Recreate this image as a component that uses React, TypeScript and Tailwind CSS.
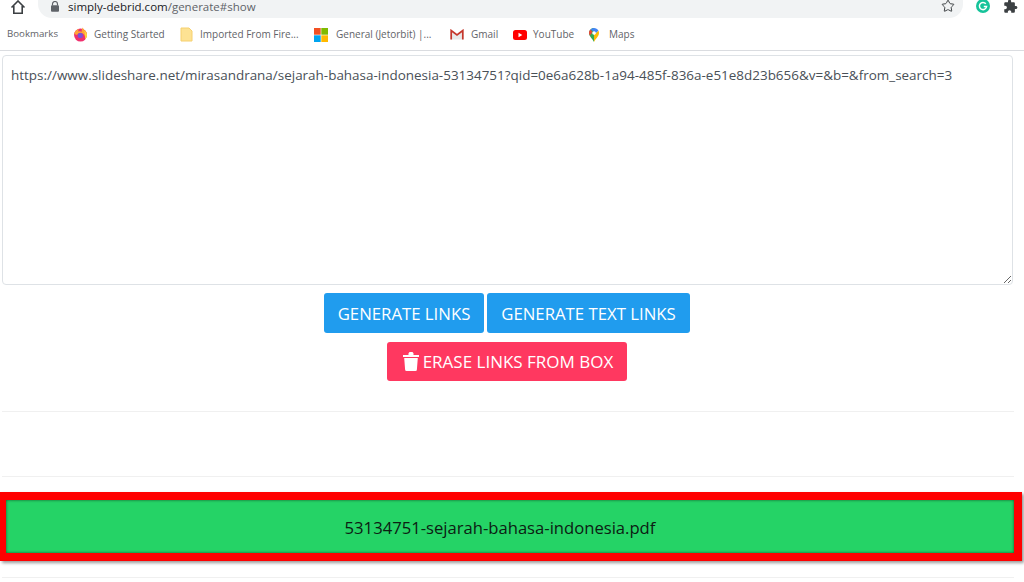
import { Star } from "lucide-react"

function Bookmark({ icon, label, className }: { icon: React.ReactNode; label: string; className: string }) {
    return (
        <div className={"flex items-center " + className}>
            {icon}
            <span className="text-[10px] text-[#5f6368] whitespace-nowrap">{label}</span>
        </div>
    )
}

const FirefoxIcon = (
    <svg width="15" height="15" viewBox="0 0 16 16" className="mr-[6px] shrink-0">
        <circle cx="8" cy="8.600" r="6.900" fill="#f0306e" />
        <path d="M1.300 7.500C2 4.500 4 2.500 6.500 2.200 5.800 3 5.500 4 5.800 5c1-.6 2.500-.6 3.600.2C9 3.500 9.500 1.800 10.500.5c.2 1.200 1 2 2.200 3 1.400 1.200 2.300 3 2.200 5-.1 1.700-.8 3.200-2 4.300.4-2.300-.4-4.800-2.600-6C8 5.800 5 6.500 4.300 8.500 3.300 8 2.200 7.800 1.300 7.500z" fill="#ffa436" />
        <path d="M12 4c1.600 1 2.900 2.800 2.900 4.700 0 1.700-.8 3.100-2 4.100.4-2.300-.2-6-.9-8.800z" fill="#ffd23f" />
        <circle cx="7.800" cy="9" r="2.800" fill="#7d4fd6" />
    </svg>
)

const NoteIcon = (
    <svg width="13" height="15" viewBox="0 0 13 15" className="mr-[7px] shrink-0">
        <path d="M1 1h8l3 3v10H1z" fill="#fde293" stroke="#f6d06f" />
    </svg>
)

const MicrosoftIcon = (
    <svg width="14" height="14" viewBox="0 0 14 14" className="mr-[8px] shrink-0">
        <rect x="0" y="0" width="6.700" height="6.700" fill="#f25022" />
        <rect x="7.300" y="0" width="6.700" height="6.700" fill="#7fba00" />
        <rect x="0" y="7.300" width="6.700" height="6.700" fill="#00a4ef" />
        <rect x="7.300" y="7.300" width="6.700" height="6.700" fill="#ffb900" />
    </svg>
)

const GmailIcon = (
    <svg width="14" height="11" viewBox="0 0 14 11" className="mr-[7px] shrink-0">
        <path d="M0.500 10.500V1l6.500 5 6.500-5v9.500" fill="#e8e8e8" />
        <path d="M1.200 10.500V1.500L7 6l5.800-4.500v9" fill="none" stroke="#c5372c" strokeWidth="1.700" />
    </svg>
)

const YoutubeIcon = (
    <svg width="14" height="10" viewBox="0 0 14 10" className="mr-[6px] shrink-0">
        <rect width="14" height="10" rx="2.500" fill="#ff0000" />
        <path d="M5.500 2.800v4.400L9.300 5z" fill="#fff" />
    </svg>
)

const MapsIcon = (
    <svg width="10" height="14" viewBox="0 0 10 14" className="mr-[10px] shrink-0">
        <path d="M5 14C3.800 11 0 8.500 0 5a5 5 0 0 1 5-5z" fill="#34a853" />
        <path d="M5 14c1.200-3 5-5.500 5-9 0-.9-.2-1.700-.6-2.400L5 7z" fill="#fbbc04" />
        <path d="M1.400 1.500A5 5 0 0 1 5 0c1.900 0 3.500 1 4.400 2.600L7 5z" fill="#4285f4" />
        <path d="M0 5c0-1.400.5-2.600 1.400-3.500L3.500 4 1 7.500C.4 6.700 0 5.900 0 5z" fill="#ea4335" />
        <circle cx="5" cy="5" r="1.800" fill="#fff" />
    </svg>
)

export default function App() {
    return (
        <div className="w-[1024px] h-[582px] overflow-hidden bg-white font-['Open_Sans',sans-serif]">

            <div className="h-[18px] flex items-center">
                <div className="w-[38px] flex justify-center">
                    <svg width="16" height="16" viewBox="0 0 16 16" className="mb-[5px] mr-[3px]" fill="none" stroke="#3c4043" strokeWidth="1.600">
                        <path d="M1.500 8.500 8 2l6.500 6.500M3.800 7v7.200h8.400V7" />
                    </svg>
                </div>
                <div className="w-[925px] h-[18px] bg-[#f1f3f4] rounded-br-[14px] rounded-bl-[14px] flex items-center pl-[12px] pb-[4px]">
                    <svg width="10" height="11" viewBox="0 0 10 11" className="mr-[8px] mb-[2px]">
                        <path d="M2.500 4.500V3a2.500 2.500 0 0 1 5 0v1.500" fill="none" stroke="#5f6368" strokeWidth="1.200" />
                        <rect x="1" y="4.300" width="8" height="6.500" rx="1" fill="#5f6368" />
                    </svg>
                    <span className="text-[11.500px] text-[#202124] leading-[14px]">simply-debrid.com<span className="text-[#5f6368]">/generate#show</span></span>
                    <Star size={14} className="ml-auto mr-[8px] mb-[2px] text-[#3c4043]" strokeWidth={1.700} />
                </div>
                <div className="flex-1 flex items-center pb-[6px]">
                    <svg width="14" height="14" viewBox="0 0 14 14" className="ml-[13px]">
                        <circle cx="7" cy="7" r="7" fill="#15c39a" />
                        <path d="M9.800 4.700A3.600 3.600 0 1 0 10.600 7.500H7.800" fill="none" stroke="#fff" strokeWidth="1.500" />
                    </svg>
                    <svg width="15" height="15" viewBox="0 0 24 24" className="ml-[13px]" fill="#3c4043">
                        <path d="M20.500 11H19V7c0-1.100-.9-2-2-2h-4V3.500C13 2.120 11.880 1 10.500 1S8 2.120 8 3.500V5H4c-1.100 0-1.990.9-1.990 2v3.800H3.500c1.490 0 2.700 1.210 2.700 2.700s-1.210 2.700-2.700 2.700H2V20c0 1.100.9 2 2 2h3.800v-1.500c0-1.490 1.210-2.700 2.700-2.700 1.490 0 2.700 1.210 2.700 2.700V22H17c1.100 0 2-.9 2-2v-4h1.500c1.380 0 2.500-1.120 2.500-2.500S21.880 11 20.500 11z" />
                    </svg>
                </div>
            </div>

            <div className="h-[33px] border-b border-[#dadce0] flex items-center pl-[7px] pt-[1px]">
                <span className="text-[9.700px] text-[#5f6368] mr-[15px]">Bookmarks</span>
                <Bookmark icon={FirefoxIcon} label="Getting Started" className="w-[107px]" />
                <Bookmark icon={NoteIcon} label="Imported From Fire..." className="w-[134px]" />
                <Bookmark icon={MicrosoftIcon} label="General (Jetorbit) |..." className="w-[136px]" />
                <Bookmark icon={GmailIcon} label="Gmail" className="w-[63px]" />
                <Bookmark icon={YoutubeIcon} label="YouTube" className="w-[76px]" />
                <Bookmark icon={MapsIcon} label="Maps" className="w-[60px]" />
            </div>

            <div className="pl-[2px] pr-[11px] pt-[4px]">
                <textarea
                    className="block w-full h-[230px] border border-[#dee2e6] rounded-[4px] px-[8px] py-[9px] text-[13.460px] leading-[20px] text-[#495057] outline-none"
                    defaultValue="https://www.slideshare.net/mirasandrana/sejarah-bahasa-indonesia-53134751?qid=0e6a628b-1a94-485f-836a-e51e8d23b656&v=&b=&from_search=3"
                />
            </div>

            <div className="flex justify-center gap-[3px] mt-[8px] pr-[10px]">
                <button className="w-[160px] h-[40px] pt-[1px] rounded-[3px] bg-[#209cee] text-white text-[16.750px]">GENERATE LINKS</button>
                <button className="w-[203px] h-[40px] pt-[1px] rounded-[3px] bg-[#209cee] text-white text-[16.750px]">GENERATE TEXT LINKS</button>
            </div>

            <div className="flex justify-center mt-[9px] pr-[10px]">
                <button className="w-[240px] h-[39px] pt-[1px] pl-[2px] rounded-[3px] bg-[#ff3860] text-white text-[17px] flex items-center justify-center">
                    <svg width="16" height="19" viewBox="0 0 16 19" className="mr-[4px] -mt-[1px]" fill="#fff">
                        <path d="M0 3h16v2H0zM5.500 1.200 6.500 0h3l1 1.200V3h-5zM1.200 6h13.600l-.9 11.500a1.500 1.500 0 0 1-1.500 1.500H3.600a1.500 1.500 0 0 1-1.500-1.500z" />
                    </svg>
                    ERASE LINKS FROM BOX
                </button>
            </div>

            <div className="h-px w-[1012px] ml-[2px] bg-[#f0f0f0] mt-[30px]" />
            <div className="h-px w-[1012px] ml-[2px] bg-[#f0f0f0] mt-[64px]" />

            <div className="mt-[15px] w-[1022px] h-[69px] border-[#ff0000] border-t-[8px] border-b-[8px] border-l-[6px] border-r-[8px] shadow-[2px_2px_3px_rgba(0,0,0,0.4)]">
                <div className="h-full bg-[#25d366] shadow-[inset_0_0_3px_rgba(0,0,0,0.6)] flex items-center justify-center pr-[20px] pt-[3px] text-[16.640px] text-[#0c2013]">
                    53134751-sejarah-bahasa-indonesia.pdf
                </div>
            </div>

            <div className="h-px w-[1012px] ml-[2px] bg-[#f0f0f0] mt-[16px]" />
        </div>
    )
}
